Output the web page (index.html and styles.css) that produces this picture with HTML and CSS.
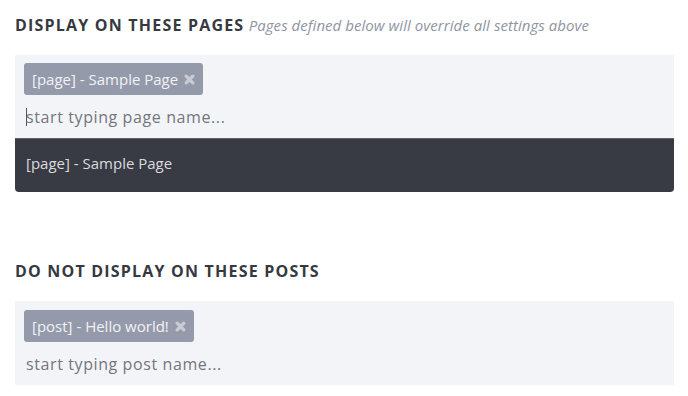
FILE: index.html
```html
<!DOCTYPE html>
<html lang="en">
<head>
    <meta charset="UTF-8">
    <meta name="viewport" content="width=device-width, initial-scale=1.0">
    <title>Display Rules</title>
    <link rel="stylesheet" href="styles.css">
</head>
<body>
    <div class="section">
        <h3 class="section-title">Display on these pages <span class="hint">Pages defined below will override all settings above</span></h3>
        <div class="picker open">
            <div class="tags">
                <span class="tag">[page] - Sample Page
                    <svg class="tag-remove" viewBox="0 0 10 10" width="11" height="11"><path d="M2 2L8 8M8 2L2 8"/></svg>
                </span>
            </div>
            <div class="search"><span class="caret"></span>start typing page name...</div>
            <ul class="dropdown">
                <li>[page] - Sample Page</li>
            </ul>
        </div>
    </div>

    <div class="section second">
        <h3 class="section-title">Do not display on these posts</h3>
        <div class="picker">
            <div class="tags">
                <span class="tag">[post] - Hello world!
                    <svg class="tag-remove" viewBox="0 0 10 10" width="11" height="11"><path d="M2 2L8 8M8 2L2 8"/></svg>
                </span>
            </div>
            <div class="search">start typing post name...</div>
        </div>
    </div>
</body>
</html>
```

FILE: styles.css
```css
body {
    margin: 0;
    padding: 0 14px 0 15px;
    background-color: #fff;
    font-family: "Open Sans", "Noto Sans", sans-serif;
}

.section-title {
    margin: 0;
    padding-top: 14px;
    font-size: 16px;
    line-height: 22px;
    font-weight: 700;
    text-transform: uppercase;
    letter-spacing: 1.2px;
    color: #363941;
}

.hint {
    margin-left: -1px;
    font-size: 15px;
    font-weight: 400;
    font-style: italic;
    text-transform: none;
    letter-spacing: 0.05px;
    color: #8f95a3;
}

.picker {
    margin-top: 19px;
    background-color: #f3f4f8;
}

.tags {
    padding: 8px 9px 0;
}

.tag {
    display: inline-flex;
    align-items: center;
    gap: 6px;
    height: 32px;
    padding: 0 8px;
    border-radius: 3px;
    background-color: #959aab;
    color: #f1f2f6;
    font-size: 15px;
}

.tag-remove {
    stroke: #c9ccd5;
    stroke-width: 3;
    stroke-linecap: round;
}

.search {
    display: flex;
    align-items: center;
    height: 43px;
    padding: 0 11px;
    font-size: 16px;
    letter-spacing: 0.6px;
    color: #73767e;
}

.caret {
    width: 1px;
    height: 18px;
    margin-right: -1px;
    background-color: #555;
}

.dropdown {
    margin: 0;
    padding: 0;
    list-style: none;
    background-color: #393b44;
    border-top: 1px solid #62646d;
    border-radius: 0 0 4px 4px;
}

.dropdown li {
    padding: 13px 11px 18px;
    line-height: 22px;
    font-size: 15px;
    color: #d9dade;
}

.second {
    margin-top: 54px;
}

.second .tags {
    padding-top: 9px;
}
```
